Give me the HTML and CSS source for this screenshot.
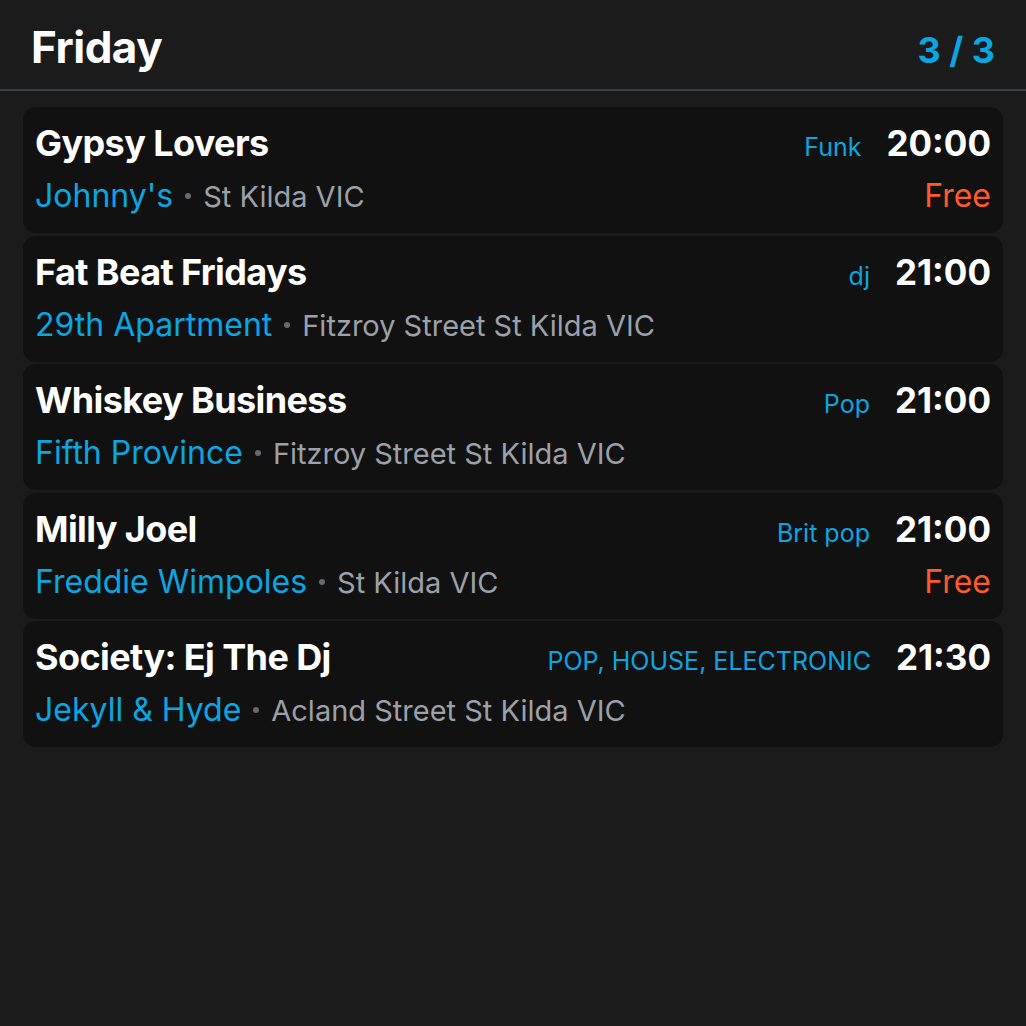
FILE: index.html
```html
<!DOCTYPE html>
<html>
<head>
<meta charset="utf-8">
<link rel="stylesheet" href="styles.css">
</head>
<body>
<header class="header">
  <h1 class="day">Friday</h1>
  <div class="count">3 / 3</div>
</header>
<main class="list">
  <div class="card">
    <div class="row top">
      <div class="title">Gypsy Lovers</div>
      <div class="genre">Funk</div>
      <div class="time">20:00</div>
    </div>
    <div class="row bottom">
      <span class="venue">Johnny's</span><span class="dot"></span><span class="addr">St Kilda VIC</span>
      <span class="price">Free</span>
    </div>
  </div>
  <div class="card">
    <div class="row top">
      <div class="title">Fat Beat Fridays</div>
      <div class="genre">dj</div>
      <div class="time">21:00</div>
    </div>
    <div class="row bottom">
      <span class="venue">29th Apartment</span><span class="dot"></span><span class="addr">Fitzroy Street St Kilda VIC</span>
    </div>
  </div>
  <div class="card">
    <div class="row top">
      <div class="title">Whiskey Business</div>
      <div class="genre">Pop</div>
      <div class="time">21:00</div>
    </div>
    <div class="row bottom">
      <span class="venue">Fifth Province</span><span class="dot"></span><span class="addr">Fitzroy Street St Kilda VIC</span>
    </div>
  </div>
  <div class="card">
    <div class="row top">
      <div class="title">Milly Joel</div>
      <div class="genre">Brit pop</div>
      <div class="time">21:00</div>
    </div>
    <div class="row bottom">
      <span class="venue">Freddie Wimpoles</span><span class="dot"></span><span class="addr">St Kilda VIC</span>
      <span class="price">Free</span>
    </div>
  </div>
  <div class="card">
    <div class="row top">
      <div class="title">Society: Ej The Dj</div>
      <div class="genre">POP, HOUSE, ELECTRONIC</div>
      <div class="time">21:30</div>
    </div>
    <div class="row bottom">
      <span class="venue">Jekyll &amp; Hyde</span><span class="dot"></span><span class="addr">Acland Street St Kilda VIC</span>
    </div>
  </div>
</main>
</body>
</html>
```
FILE: styles.css
```css
html, body {
  margin: 0;
  padding: 0;
  background: #1b1b1b;
  font-family: Inter, "Noto Sans", "Liberation Sans", sans-serif;
  color: #ffffff;
}
.header {
  display: flex;
  align-items: baseline;
  justify-content: space-between;
  padding: 20px 31px 15px 31px;
  border-bottom: 2px solid #3a3e48;
}
.day {
  margin: 0;
  font-size: 44px;
  line-height: 54px;
  font-weight: 700;
  letter-spacing: -0.5px;
}
.count {
  font-size: 36px;
  font-weight: 700;
  color: #0ba6e1;
}
.list {
  padding: 16px 23px;
  display: flex;
  flex-direction: column;
  gap: 2.5px;
}
.card {
  background: #111111;
  border-radius: 13px;
  padding: 14px 12px 20px 12px;
}
.row {
  display: flex;
  align-items: baseline;
}
.top {
  height: 44px;
}
.title {
  font-size: 36px;
  line-height: 44px;
  font-weight: 700;
  flex: 1;
  letter-spacing: -0.6px;
}
.genre {
  font-size: 25px;
  color: #0ba6e1;
  margin-right: 25px;
}
.time {
  font-size: 35px;
  font-weight: 700;
}
.bottom {
  margin-top: 14px;
  height: 34px;
  font-size: 29px;
  line-height: 34px;
}
.venue {
  color: #0ba6e1;
  font-size: 32px;
}
.dot {
  width: 6px;
  height: 6px;
  border-radius: 50%;
  background: #66696f;
  margin: 0 12px;
  align-self: center;
}
.addr {
  color: #9ca0a8;
  flex: 1;
}
.price {
  color: #ff5a2d;
  font-size: 32px;
}
```
